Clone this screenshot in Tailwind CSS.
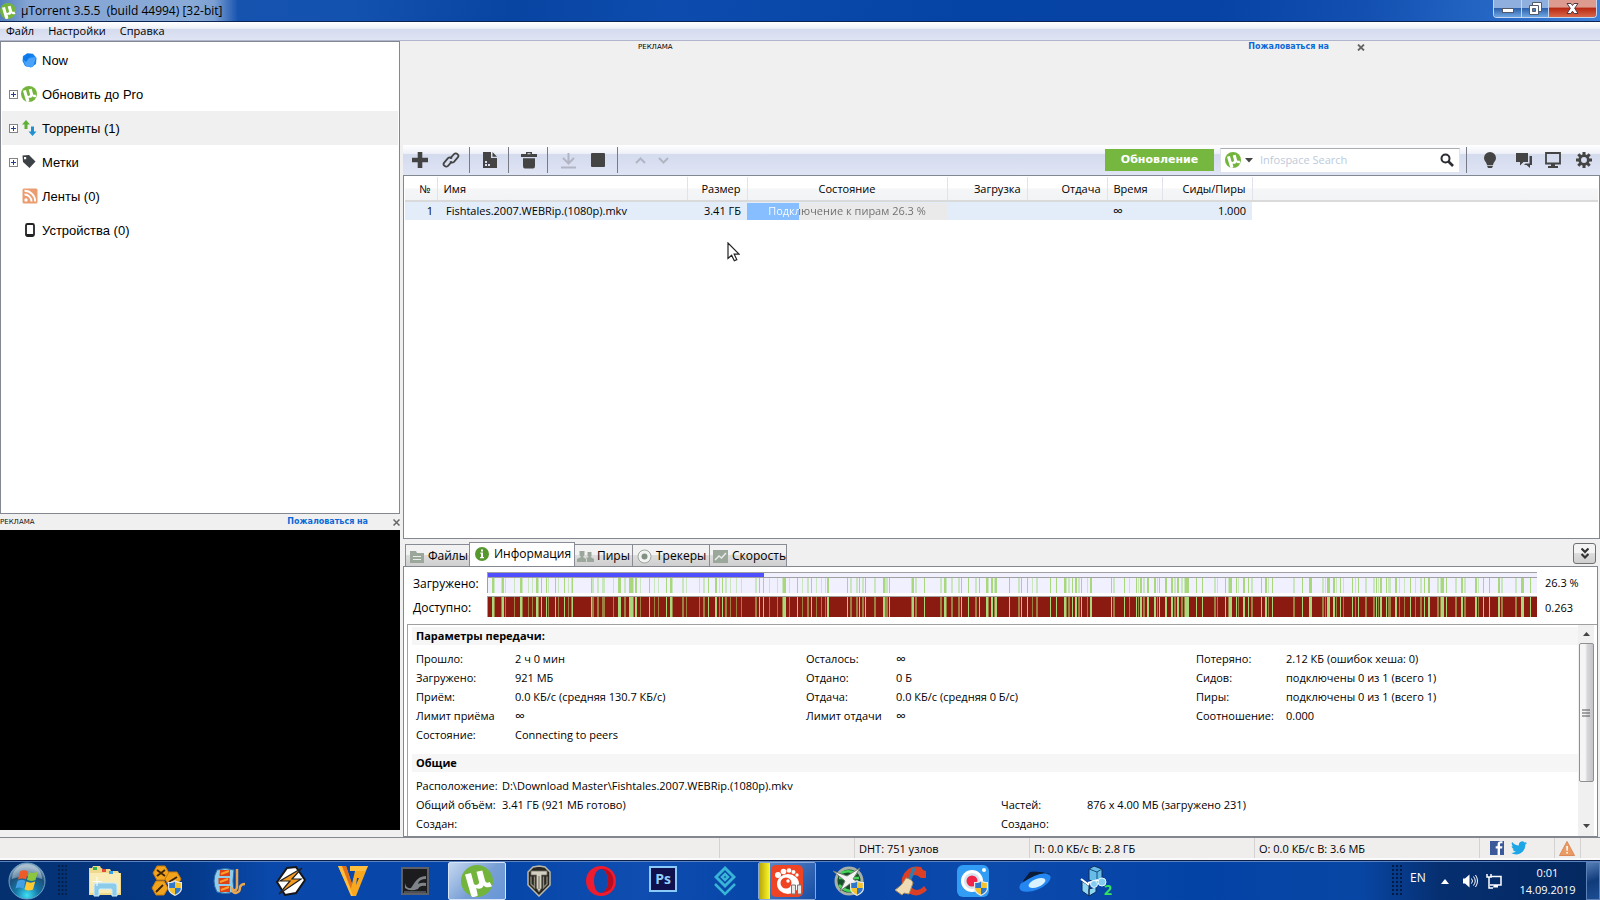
<!DOCTYPE html>
<html lang="ru">
<head>
<meta charset="utf-8">
<title>µTorrent 3.5.5</title>
<script src="https://cdn.jsdelivr.net/npm/@tailwindcss/browser@4"></script>
</head>
<body class="h-screen flex flex-col overflow-hidden bg-[#f0f0f0] text-black text-[11px] leading-4 font-['Open_Sans','Noto_Sans',sans-serif] cursor-default">
<svg class="hidden" aria-hidden="true">
  <symbol id="ut" viewBox="0 0 32 32">
    <circle cx="16" cy="16" r="16" fill="#73b53c"/>
    <path d="M4 9.500l6-1.500 2.800 10.500c.8 2.600 5.700 1.300 5.200-1.800L15.500 6.800l5.800-1.400 2.800 10.400c.5 2 2.600 2.300 4.600 1.300l2.300 4.200c-3 1.700-6.800 1.300-8.400-.900-1 3-4.600 4.200-7.400 2.600l1.600 7.500c-2 1.800-6 1.800-6.600.2z" fill="#fff"/>
  </symbol>
  <symbol id="shield" viewBox="0 0 14 16">
    <path d="M7 0c2 1.500 4 2 7 2v6c0 4-3 6-7 8-4-2-7-4-7-8V2c3 0 5-.5 7-2z" fill="#e8e8e8"/>
    <path d="M7 1.500V8H1.200V3C4 3 5.500 2.500 7 1.500zM7 8h5.800c0 3.300-2.500 5-5.800 6.700z" fill="#2f77c9"/>
    <path d="M7 1.500V8h5.800V3C10 3 8.500 2.500 7 1.500zM7 8H1.200c0 3.300 2.500 5 5.800 6.700z" fill="#f5c32c"/>
  </symbol>
</svg>

<header class="flex h-[22px] shrink-0 justify-between border-b border-[#0b2350] bg-[linear-gradient(100deg,#1b55ad_0%,#1452b0_22%,#0844a2_32%,#0d4cae_42%,#0543a4_60%,#0743a4_76%,#124fb0_85%,#2566c4_93%,#3d80d8_100%)]">
  <div class="flex h-[21px] items-center gap-[5px] bg-[linear-gradient(90deg,#5580bd_0%,#84a5d3_12%,#8aabd8_80%,#7b9fd2_90%,transparent_100%)] pr-4">
    <svg class="size-4" viewBox="0 0 32 32"><use href="#ut"/></svg>
    <h1 class="whitespace-pre text-[12px] leading-4">µTorrent 3.5.5  (build 44994) [32-bit]</h1>
  </div>
  <div class="mr-[3px] flex h-[18px] overflow-hidden rounded-b border border-t-0 border-[#c4d6ee]">
    <button aria-label="Свернуть" class="grid w-7 place-items-center border-r border-[#c4d6ee] bg-[linear-gradient(#8fb0df_45%,#2e62ad_50%,#6ea6e2)]"><svg width="12" height="10" viewBox="0 0 12 10"><rect x=".5" y="4.500" width="11" height="4" fill="#fff" stroke="#555a6a"/></svg></button>
    <button aria-label="Восстановить" class="grid w-[27px] place-items-center border-r border-[#c4d6ee] bg-[linear-gradient(#8fb0df_45%,#2e62ad_50%,#6ea6e2)]"><svg width="13" height="13" viewBox="0 0 13 13"><path d="M3.500.5h9v9h-9z" fill="#fff" stroke="#555a6a"/><path d="M.5 3.500h9v9h-9z" fill="#fff" stroke="#555a6a"/><path d="M3.500 6.500h3v3h-3z" fill="#4e7fc4" stroke="#555a6a"/></svg></button>
    <button aria-label="Закрыть" class="grid w-[47px] place-items-center bg-[linear-gradient(#dd9a8e_40%,#b92b14_50%,#d9674a)]"><svg width="13" height="11" viewBox="0 0 13 11"><path d="M1 .5h4l1.500 2L8 .5h4L8.700 5.300 12 10.500H8.200l-1.700-2.300-1.700 2.300H1l3.300-5.200z" fill="#fff" stroke="#4f3b46"/></svg></button>
  </div>
</header>

<nav class="flex h-[19px] shrink-0 items-center gap-[14px] border-b border-[#b0b5cc] bg-[linear-gradient(#ffffff,#eef1f8_35%,#d4dbee_40%,#e0e5f5)] px-[6px]">
  <a href="#file">Файл</a><a href="#settings">Настройки</a><a href="#help">Справка</a>
</nav>

<main class="flex min-h-0 flex-1">
  <aside class="flex w-1/4 shrink-0 flex-col font-['Liberation_Sans',sans-serif]">
    <ul class="min-h-0 flex-1 border border-[#828790] bg-white p-px text-[13px] leading-4">
      <li class="flex h-[34px] items-center gap-[5px] pl-[20px]"><svg width="15" height="15" viewBox="0 0 15 15"><path d="M5 .5 11 .7 14.500 5 14 11 9 14.500 3 13 .5 8 1 3z" fill="#1583f2"/><path d="M14 4 11 14 4 13.500 1 6z" fill="#4aa3f8"/><path d="M5 .5 10 1 4 9 .8 6z" fill="#0b78ea"/></svg><span class="pt-px">Now</span></li>
      <li class="flex h-[34px] items-center pl-[7px]"><button aria-label="Развернуть" class="mr-[3px] grid size-[9px] place-items-center border border-[#848484] bg-white"><svg width="5" height="5" viewBox="0 0 5 5"><path d="M0 2.500h5M2.500 0v5" stroke="#27408b"/></svg></button><svg class="mr-[5px] size-4" viewBox="0 0 32 32"><use href="#ut"/></svg><span class="pt-px">Обновить до Pro</span></li>
      <li class="flex h-[34px] items-center bg-[#f0f0f0] pl-[7px]"><button aria-label="Развернуть" class="mr-[3px] grid size-[9px] place-items-center border border-[#848484] bg-white"><svg width="5" height="5" viewBox="0 0 5 5"><path d="M0 2.500h5M2.500 0v5" stroke="#27408b"/></svg></button><svg class="mr-[5px]" width="16" height="16" viewBox="0 0 16 16"><path d="M5 0 9 4.500H6.500V9h-3V4.500H1z" fill="#5fae35"/><path d="M11.500 16 7.500 11.500H10V6.500h3v5h2.500z" fill="#2190d2"/></svg><span class="pt-px">Торренты (1)</span></li>
      <li class="flex h-[34px] items-center pl-[7px]"><button aria-label="Развернуть" class="mr-[3px] grid size-[9px] place-items-center border border-[#848484] bg-white"><svg width="5" height="5" viewBox="0 0 5 5"><path d="M0 2.500h5M2.500 0v5" stroke="#27408b"/></svg></button><svg class="mr-[5px]" width="16" height="16" viewBox="0 0 16 16"><path fill-rule="evenodd" d="M1.500 1.500 8 1l6.500 6.500L8.500 14 2 8zM3 3v2.200h2.200V3z" fill="#3d4246"/></svg><span class="pt-px">Метки</span></li>
      <li class="flex h-[34px] items-center gap-[4px] pl-[20px]"><svg width="16" height="16" viewBox="0 0 16 16"><rect x=".5" y=".5" width="15" height="15" rx="1.500" fill="#ec9d70"/><circle cx="4" cy="12" r="1.700" fill="#fff"/><path d="M2.500 6.500a7 7 0 0 1 7 7M2.500 2.800A10.700 10.700 0 0 1 13.200 13.500" fill="none" stroke="#fff" stroke-width="1.900"/></svg><span class="pt-px">Ленты (0)</span></li>
      <li class="flex h-[34px] items-center gap-[4px] pl-[20px]"><svg width="16" height="16" viewBox="0 0 16 16"><rect x="4" y="2" width="8" height="12" rx="1.500" fill="#fff" stroke="#222" stroke-width="1.800"/><path d="M4 13h8" stroke="#222" stroke-width="2"/></svg><span class="pt-px">Устройства (0)</span></li>
    </ul>
    <div class="flex h-4 shrink-0 items-center font-['DejaVu_Sans',sans-serif] text-[7px] leading-4">
      <span class="flex-1 text-[#111]">РЕКЛАМА</span>
      <a href="#report" class="mr-[25px] text-[8px] font-bold text-[#0a68d8]">Пожаловаться на</a>
      <button aria-label="Закрыть рекламу"><svg width="7" height="7" viewBox="0 0 7 7"><path d="M.5.5l6 6M6.500.5l-6 6" stroke="#666" stroke-width="1.500"/></svg></button>
    </div>
    <div class="h-[300px] shrink-0 bg-black"></div>
    <div class="h-[7px] shrink-0"></div>
  </aside>

  <section class="ml-[3px] flex min-w-0 flex-1 flex-col">
    <div class="flex h-[104px] shrink-0 items-start pl-[235px] pr-[235px] font-['DejaVu_Sans',sans-serif] text-[7px] leading-[12px]">
      <span class="flex-1">РЕКЛАМА</span>
      <a href="#report" class="mr-[28px] text-[8px] font-bold text-[#0a68d8]">Пожаловаться на</a>
      <button aria-label="Закрыть рекламу" class="pt-[3px]"><svg width="8" height="7" viewBox="0 0 8 7"><path d="M1 .5l6 6M7 .5l-6 6" stroke="#666" stroke-width="1.800"/></svg></button>
    </div>

    <div class="flex h-[30px] shrink-0 items-center bg-[linear-gradient(#ffffff,#eef1f8_28%,#d4dbee_32%,#e0e5f5)] text-[#444]">
      <button aria-label="Добавить торрент" class="ml-[9px]"><svg width="16" height="16" viewBox="0 0 16 16"><path d="M5.700 0h4.600v5.700H16v4.600h-5.700V16H5.700v-5.700H0V5.700h5.700z" fill="currentColor"/></svg></button>
      <button aria-label="Добавить по ссылке" class="ml-[14px]"><svg width="18" height="18" viewBox="0 0 18 18" fill="none" stroke="currentColor" stroke-width="1.800"><path d="M8 7.500 12 3.200c2.200-2.200 5.800.8 3.800 3.200L12 10.800c-1.300 1.200-3 1-4-.3"/><path d="M10 10.500 6 14.800c-2.200 2.200-5.800-.8-3.800-3.200L6 7.200c1.300-1.200 3-1 4 .3"/></svg></button>
      <i class="ml-[9px] h-[26px] w-px bg-[#777b88]"></i>
      <button aria-label="Создать торрент" class="ml-[12px]"><svg width="16" height="17" viewBox="0 0 16 17"><path fill-rule="evenodd" d="M1 0h8v6h6v10H1zM3 9v2h2V9zm0 3v2h2v-2zm3 0v2h2v-2zM10.500 0 15 4.800h-4.500z" fill="currentColor"/></svg></button>
      <i class="ml-[10px] h-[26px] w-px bg-[#777b88]"></i>
      <button aria-label="Удалить" class="ml-[12px]"><svg width="16" height="17" viewBox="0 0 16 17"><path d="M5 0h6v2h5v3H0V2h5zM6.500 1.200v1h3v-1zM2 6.200h12V14q0 2.500-2 2.500H4Q2 16.500 2 14z" fill="currentColor" fill-rule="evenodd"/></svg></button>
      <i class="ml-[10px] h-[26px] w-px bg-[#777b88]"></i>
      <button aria-label="Запустить" class="ml-[13px] text-[#b2b6c4]"><svg width="15" height="17" viewBox="0 0 15 17" fill="none" stroke="currentColor" stroke-width="2"><path d="M7.500 1v10M2 6l5.500 5.500L13 6M0 15.500h15"/></svg></button>
      <button aria-label="Остановить" class="ml-[15px]"><svg width="14" height="14" viewBox="0 0 14 14"><rect width="14" height="14" rx="1" fill="currentColor"/></svg></button>
      <i class="ml-[12px] h-[26px] w-px bg-[#777b88]"></i>
      <button aria-label="Вверх" class="ml-[17px] text-[#b2b6c4]"><svg width="11" height="7" viewBox="0 0 11 7"><path d="M1 6l4.500-4.500L10 6" fill="none" stroke="currentColor" stroke-width="2"/></svg></button>
      <button aria-label="Вниз" class="ml-[12px] text-[#b2b6c4]"><svg width="11" height="7" viewBox="0 0 11 7"><path d="M1 1l4.500 4.500L10 1" fill="none" stroke="currentColor" stroke-width="2"/></svg></button>
      <button class="ml-auto h-[22px] w-[109px] bg-[#76b83f] font-['DejaVu_Sans',sans-serif] text-[11px] font-bold text-white">Обновление</button>
      <div class="ml-[6px] flex h-[25px] w-[240px] items-center border border-t-[#abadb3] border-[#dfe3ee] bg-white pl-1 pr-[5px]">
        <svg class="size-4" viewBox="0 0 32 32"><use href="#ut"/></svg>
        <button aria-label="Поисковик" class="ml-[4px]"><svg width="8" height="5" viewBox="0 0 8 5"><path d="M0 0h8L4 4.500z" fill="#444"/></svg></button>
        <input aria-label="Поиск" placeholder="Infospace Search" class="ml-[7px] min-w-0 flex-1 text-[11px] outline-none placeholder:text-[#bccbdc]">
        <button aria-label="Найти"><svg width="14" height="14" viewBox="0 0 14 14" fill="none" stroke="#2a2d33"><circle cx="5.500" cy="5.500" r="4" stroke-width="2"/><path d="M8.500 8.500l4.500 4.500" stroke-width="2.600"/></svg></button>
      </div>
      <i class="ml-[6px] h-[26px] w-px bg-[#777b88]"></i>
      <button aria-label="Подсказка" class="ml-[17px]"><svg width="12" height="16" viewBox="0 0 12 16"><path d="M6 0a6 6 0 0 1 6 6c0 3-2.500 4-3 7H3c-.500-3-3-4-3-7a6 6 0 0 1 6-6zM3 13.800h6L8 16H4z" fill="currentColor"/></svg></button>
      <button aria-label="Чат" class="ml-[20px]"><svg width="16" height="15" viewBox="0 0 16 15"><path d="M0 0h12v9H7.500L4 12.500V9H0z" fill="currentColor"/><path d="M13.500 3H16v9h-2v3l-3.500-3H8l1.500-1.500h4z" fill="currentColor"/></svg></button>
      <button aria-label="Удалённый доступ" class="ml-[13px]"><svg width="16" height="16" viewBox="0 0 16 16"><path d="M1 1h14v10.500H1z" fill="none" stroke="currentColor" stroke-width="1.800"/><path d="M6 12h4v2h3v2H3v-2h3z" fill="currentColor"/></svg></button>
      <button aria-label="Настройки" class="ml-[15px] mr-[8px]"><svg width="16" height="16" viewBox="0 0 16 16"><g stroke="currentColor" stroke-width="3"><path d="M8 0v3M8 13v3M0 8h3M13 8h3M2.300 2.300l2.200 2.200M11.500 11.500l2.200 2.200M2.300 13.700l2.200-2.200M11.500 4.500l2.200-2.200"/></g><circle cx="8" cy="8" r="4.300" fill="none" stroke="currentColor" stroke-width="2.700"/></svg></button>
    </div>

    <div class="relative min-h-0 flex-1 border border-[#828790] bg-white p-px">
      <table class="w-full table-fixed border-collapse whitespace-nowrap text-[11px] leading-4">
        <colgroup><col class="w-[32px]"><col class="w-[250px]"><col class="w-[60px]"><col class="w-[200px]"><col class="w-[80px]"><col class="w-[80px]"><col class="w-[55px]"><col class="w-[90px]"><col></colgroup>
        <thead class="bg-[linear-gradient(#ffffff_45%,#f5f6f7_50%,#f2f3f4)]">
          <tr class="h-6 border-b-2 border-[#dadada]">
            <th class="border-r border-[#e2e3ea] pr-[6px] text-right font-normal">№</th>
            <th class="border-r border-[#e2e3ea] pl-[6px] text-left font-normal">Имя</th>
            <th class="border-r border-[#e2e3ea] pr-[6px] text-right font-normal">Размер</th>
            <th class="border-r border-[#e2e3ea] font-normal">Состояние</th>
            <th class="border-r border-[#e2e3ea] pr-[6px] text-right font-normal">Загрузка</th>
            <th class="border-r border-[#e2e3ea] pr-[6px] text-right font-normal">Отдача</th>
            <th class="border-r border-[#e2e3ea] pl-[6px] text-left font-normal">Время</th>
            <th class="border-r border-[#e2e3ea] pr-[6px] text-right font-normal">Сиды/Пиры</th>
            <th></th>
          </tr>
        </thead>
        <tbody>
          <tr class="h-[19px]">
            <td class="bg-[#e3edf9] pr-[4px] text-right">1</td>
            <td class="bg-[#e3edf9] pl-[9px]">Fishtales.2007.WEBRip.(1080p).mkv</td>
            <td class="bg-[#e3edf9] pr-[6px] text-right">3.41 ГБ</td>
            <td class="bg-[#e3edf9]"><div class="h-[17px] bg-[linear-gradient(90deg,#86beff_26%,#eaeaea_26%)] text-center"><span class="block bg-[linear-gradient(90deg,#ffffff_26%,#6c6c6c_26%)] bg-clip-text text-transparent">Подключение к пирам 26.3 %</span></div></td>
            <td class="bg-[#e3edf9]"></td>
            <td class="bg-[#e3edf9]"></td>
            <td class="bg-[#e3edf9] pl-[6px] text-[14px]">∞</td>
            <td class="bg-[#e3edf9] pr-[6px] text-right">1.000</td>
            <td></td>
          </tr>
        </tbody>
      </table>
      <svg class="absolute left-[323px] top-[66px]" width="13" height="20" viewBox="0 0 13 20"><path d="M1 1v15.500l3.600-3.300 2.700 5.600 2.500-1.200-2.600-5.400H12z" fill="#fff" stroke="#222" stroke-width="1.200"/></svg>
    </div>

    <div class="flex h-[27px] shrink-0 items-end pl-[2px] pr-[4px] text-[12px] leading-4">
      <div role="tablist" class="flex items-end">
        <button role="tab" class="flex h-[22px] w-[64px] items-center gap-[4px] overflow-hidden whitespace-nowrap border border-b-0 border-r-0 border-[#898c95] bg-[linear-gradient(#f2f2f2_45%,#dddddd_50%,#cfcfcf)] pl-[4px] pt-px"><svg class="shrink-0" width="14" height="13" viewBox="0 0 14 13"><path d="M0 1h6l1 2h7v10H0z" fill="#9ba79b"/><path d="M3 6.500h8M3 9.500h8" stroke="#e9ece9"/></svg>Файлы</button>
        <button role="tab" aria-selected="true" class="flex h-6 w-[106px] items-center gap-[5px] overflow-hidden whitespace-nowrap border border-b-0 border-[#898c95] bg-white pb-[1px] pl-[5px]"><svg class="shrink-0" width="14" height="14" viewBox="0 0 14 14"><circle cx="7" cy="7" r="7" fill="#56982d"/><path d="M6 2.500h2v2H6zM5.300 5.500H8V10h1v1.200H5V10h1V6.700h-.7z" fill="#fff"/></svg>Информация</button>
        <button role="tab" class="flex h-[22px] w-[58px] items-center gap-[3px] overflow-hidden whitespace-nowrap border border-b-0 border-l-0 border-[#898c95] bg-[linear-gradient(#f2f2f2_45%,#dddddd_50%,#cfcfcf)] pl-[2px] pt-px"><svg class="shrink-0" width="17" height="12" viewBox="0 0 17 12"><path d="M2.500 1h5v4L6 7l3 2v3H0V9l4-2-1.500-2zM10.500 2h4v4l-1 1 3.500 2v3h-7V9L9 8l3-1-1.500-1z" fill="#9ba79b"/></svg>Пиры</button>
        <button role="tab" class="flex h-[22px] w-[77px] items-center gap-[4px] overflow-hidden whitespace-nowrap border border-b-0 border-l-0 border-[#898c95] bg-[linear-gradient(#f2f2f2_45%,#dddddd_50%,#cfcfcf)] pl-[4px] pt-px"><svg class="shrink-0" width="15" height="15" viewBox="0 0 15 15"><circle cx="7.500" cy="7.500" r="6.500" fill="#f2f3f2" stroke="#9ba79b"/><circle cx="7.500" cy="7.500" r="3" fill="#829182"/></svg>Трекеры</button>
        <button role="tab" class="flex h-[22px] w-[77px] items-center gap-[4px] overflow-hidden whitespace-nowrap border border-b-0 border-l-0 border-[#898c95] bg-[linear-gradient(#f2f2f2_45%,#dddddd_50%,#cfcfcf)] pl-[3px] pt-px"><svg class="shrink-0" width="15" height="13" viewBox="0 0 15 13"><path d="M0 0h15v13H0z" fill="#9ba79b"/><path d="M2 10 6 6l2.500 2L13 3" fill="none" stroke="#e9ece9" stroke-width="1.500"/></svg>Скорость</button>
      </div>
      <button aria-label="Скрыть панель" class="mb-[2px] ml-auto grid h-[21px] w-[23px] place-items-center rounded-[3px] border border-[#707070] bg-[linear-gradient(#f4f4f4_45%,#dddddd_50%,#cfcfcf)]"><svg width="8" height="11" viewBox="0 0 8 11"><path d="M.5.5 4 4 7.500.5M.5 6 4 9.500 7.500 6" fill="none" stroke="#333" stroke-width="2.200"/></svg></button>
    </div>

    <div class="mr-[2px] flex h-[271px] shrink-0 flex-col border border-[#828790] bg-white">
      <div class="grid grid-cols-[74px_1fr_60px] gap-y-[3px] pl-[9px] pt-[5px] text-[12px]">
        <span class="pt-[4px]">Загружено:</span>
        <div class="h-[21px] border-l border-t border-[#a0a0a0] bg-[#f0f0ff]">
          <div class="h-[4px] bg-[#4f4fff]" style="width:26.300%"></div>
          <svg id="have" class="h-4 w-full border-t border-[#a0a0a0]" viewBox="488 0 1049 1" preserveAspectRatio="none" shape-rendering="crispEdges"></svg>
        </div>
        <span class="pl-[8px] pt-[3px] text-[11px]">26.3 %</span>
        <span class="pt-[4px]">Доступно:</span>
        <div class="h-[21px] border-l border-t border-[#a0a0a0] bg-[#8b1a10]">
          <svg id="avail" class="h-full w-full" viewBox="488 0 1049 1" preserveAspectRatio="none" shape-rendering="crispEdges"></svg>
        </div>
        <span class="pl-[8px] pt-[4px] text-[11px]">0.263</span>
      </div>
      <div class="ml-[3px] mt-[7px] flex min-h-0 flex-1 border-l border-t border-[#a0a0a0]">
        <div class="min-w-0 flex-1 pl-[4px] pt-[2px] whitespace-nowrap">
          <h2 class="mb-[4px] bg-[#f6f6f6] pl-[4px] text-[11px] font-bold leading-[18px]">Параметры передачи:</h2>
          <div class="grid grid-cols-[390px_390px_1fr] pl-[4px] leading-[19px]">
            <dl class="grid grid-cols-[99px_1fr] content-start"><dt>Прошло:</dt><dd>2 ч 0 мин</dd><dt>Загружено:</dt><dd>921 МБ</dd><dt>Приём:</dt><dd>0.0 КБ/с (средняя 130.7 КБ/с)</dd><dt>Лимит приёма</dt><dd class="text-[14px]">∞</dd><dt>Состояние:</dt><dd>Connecting to peers</dd></dl>
            <dl class="grid grid-cols-[90px_1fr] content-start"><dt>Осталось:</dt><dd class="text-[14px]">∞</dd><dt>Отдано:</dt><dd>0 Б</dd><dt>Отдача:</dt><dd>0.0 КБ/с (средняя 0 Б/с)</dd><dt>Лимит отдачи</dt><dd class="text-[14px]">∞</dd></dl>
            <dl class="grid grid-cols-[90px_1fr] content-start"><dt>Потеряно:</dt><dd>2.12 КБ (ошибок хеша: 0)</dd><dt>Сидов:</dt><dd>подключены 0 из 1 (всего 1)</dd><dt>Пиры:</dt><dd>подключены 0 из 1 (всего 1)</dd><dt>Соотношение:</dt><dd>0.000</dd></dl>
          </div>
          <h2 class="mb-[4px] mt-[10px] bg-[#f6f6f6] pl-[4px] text-[11px] font-bold leading-[18px]">Общие</h2>
          <div class="grid grid-cols-[585px_1fr] pl-[4px] leading-[19px]">
            <dl class="grid grid-cols-[86px_1fr] content-start"><dt>Расположение:</dt><dd>D:\Download Master\Fishtales.2007.WEBRip.(1080p).mkv</dd><dt>Общий объём:</dt><dd>3.41 ГБ (921 МБ готово)</dd><dt>Создан:</dt><dd></dd></dl>
            <dl class="grid grid-cols-[86px_1fr] content-end"><dt>Частей:</dt><dd>876 x 4.00 МБ (загружено 231)</dd><dt>Создано:</dt><dd></dd></dl>
          </div>
        </div>
        <div class="mr-[3px] flex w-4 shrink-0 flex-col items-center bg-[#f0f0f0] pb-[2px]">
          <button aria-label="Прокрутить вверх" class="grid h-[18px] w-full shrink-0 place-items-center"><svg width="7" height="4" viewBox="0 0 7 4"><path d="M3.500 0 7 4H0z" fill="#444"/></svg></button>
          <div class="grid h-[139px] w-[15px] shrink-0 place-items-center rounded-[2px] border border-[#909090] bg-[linear-gradient(90deg,#f5f5f5_40%,#d8d8dc_55%,#c4c4c8)]"><svg width="8" height="8" viewBox="0 0 8 8"><path d="M0 1h8M0 4h8M0 7h8" stroke="#555"/></svg></div>
          <button aria-label="Прокрутить вниз" class="mt-auto grid h-[17px] w-full shrink-0 place-items-center"><svg width="7" height="4" viewBox="0 0 7 4"><path d="M0 0h7L3.500 4z" fill="#444"/></svg></button>
        </div>
      </div>
    </div>
  </section>
</main>

<footer class="flex h-[23px] shrink-0 items-center justify-end border-b-2 border-t border-[#fafafa] border-t-[#828790] bg-[#f0eded] text-[11px] leading-[22px]">
  <div class="h-full w-[135px] border-l border-[#d5d2d2]"></div>
  <div class="h-full w-[175px] border-l border-[#d5d2d2] pl-[4px]">DHT: 751 узлов</div>
  <div class="h-full w-[225px] border-l border-[#d5d2d2] pl-[4px]">П: 0.0 КБ/с В: 2.8 ГБ</div>
  <div class="h-full w-[225px] border-l border-[#d5d2d2] pl-[4px]">О: 0.0 КБ/с В: 3.6 МБ</div>
  <div class="flex h-full w-[75px] items-center gap-[7px] border-l border-[#d5d2d2] pl-[10px]">
    <a href="#fb" aria-label="Facebook"><svg width="14" height="14" viewBox="0 0 14 14"><path d="M0 0h14v14H0z" fill="#3b5998"/><path d="M12.500 2.300h-1.300c-1 0-1.200.4-1.200 1.200v1.700h2.400l-.3 2.200H10V14H7.600V7.400H5.700V5.200h1.900V3.300C7.600 1.200 8.800.200 10.700.2l1.800.1z" fill="#fff"/></svg></a>
    <a href="#tw" aria-label="Twitter"><svg width="16" height="14" viewBox="0 0 24 20"><path d="M24 2.400c-.9.400-1.800.7-2.800.8 1-.6 1.800-1.600 2.200-2.700-1 .6-2 1-3.100 1.200A4.900 4.900 0 0 0 11.900 6.200C7.800 6 4.200 4 1.700.9.400 3.200 1.100 6 3.200 7.500c-.8 0-1.500-.2-2.200-.6 0 2.400 1.700 4.400 3.900 4.900-.7.200-1.500.2-2.200.1.600 2 2.400 3.400 4.600 3.400A9.900 9.900 0 0 1 0 17.300C10 23.500 21.700 16.500 21.500 4.900c1-.7 1.800-1.600 2.500-2.500z" fill="#1da5e6"/></svg></a>
  </div>
  <div class="flex h-full w-[26px] items-center border-l border-[#d5d2d2] pl-[4px]"><svg width="16" height="15" viewBox="0 0 16 15"><path d="M8 .5 15.500 14.500H.5z" fill="#ea9a62" stroke="#d98a58"/><path d="M7.200 5h1.800l-.3 5H7.500zM7.300 11h1.600v1.600H7.300z" fill="#fff"/></svg></div>
  <div class="h-full w-[20px] border-l border-[#d5d2d2]"></div>
</footer>

<div class="flex h-10 shrink-0 border-t border-[#0a1f4c] bg-[linear-gradient(90deg,#05306f_0%,#043a8c_12%,#0a49ab_17%,#0645a8_30%,#0f4eb0_40%,#0443a6_50%,#0c4aac_62%,#0443a6_75%,#0846a4_85%,#062f70_90%,#04285f_100%)]">
 <div class="flex flex-1 border-t border-[#5a83c0]">
  <button aria-label="Пуск" class="grid w-[54px] place-items-center"><svg width="38" height="38" viewBox="0 0 38 38"><defs><radialGradient id="orb" cx="50%" cy="90%" r="80%"><stop offset="0" stop-color="#3fe0f5"/><stop offset=".4" stop-color="#1578a8"/><stop offset=".75" stop-color="#1d4f79"/><stop offset="1" stop-color="#7d9fb8"/></radialGradient></defs><circle cx="19" cy="19" r="18" fill="url(#orb)" stroke="#6fa2c8"/><path d="M4 17a15 15 0 0 1 30 0q-15-6-30 0z" fill="#fff" opacity=".35"/><path d="M12 9.500q4-2.500 8 0l-2 8q-4-2-8 0z" fill="#ee5a28"/><path d="M21 10q4 2 9-.5l-2.500 8.500q-4.500 2-8.500-.2z" fill="#8cc63f"/><path d="M9.500 19q4-2.300 8 0l-2 7.500q-4-2.200-8 0z" fill="#43a0e5"/><path d="M18.500 19.500q4 2.300 8.700 0L25 27.500q-4.500 2.200-8.500-.2z" fill="#ffc933"/></svg></button>
  <svg class="ml-[3px] mt-[3px]" width="10" height="32" viewBox="0 0 10 32"><path d="M2 0v32M5.500 0v32M9 0v32" stroke="#06204a" stroke-width="2" stroke-dasharray="2 2"/></svg>
  <div class="ml-[7px] flex">
    <button aria-label="Проводник" class="grid w-[62px] place-items-center"><svg width="32" height="32" viewBox="0 0 32 32"><path d="M0 3h3l1-2h7l1 2 2 1h7l1 2h7l1 2h2v22H0z" fill="#efd98c"/><path d="M1 8h30v20H1z" fill="#f8ebb5"/><path d="M4 2h4v3H4z" fill="#35b24a"/><path d="M13 4h4v3h-4z" fill="#e24a3a"/><path d="M20 6h4v3h-4z" fill="#38a1ea"/><path d="M5 31V21q0-3 3-3h17q3 0 3 3v10h-5v-6q0-1-1-1H11q-1 0-1 1v6z" fill="#8ccbea" stroke="#cfeefa"/><path d="M8 12v9M3.500 16.500h9" stroke="#fff"/></svg></button>
    <button aria-label="Служебные программы" class="grid w-[62px] place-items-center"><svg width="32" height="32" viewBox="0 0 32 32"><g fill="#f2a31c" stroke="#c97a0b"><path d="M6 1h8l4 7-4 7H6L2 8z"/><path d="M18 7h8l4 7-4 7h-8l-4-7z"/><path d="M5 16h8l4 7-4 7H5L1 23z"/></g><path d="M6 5l8 6M14 5l-8 6M5 27l7-7M18 17l8-5" stroke="#3c2408" stroke-width="1.800"/><svg x="17" y="15" width="14" height="16"><use href="#shield"/></svg></svg></button>
    <button aria-label="Видеоредактор" class="grid w-[62px] place-items-center"><svg width="32" height="28" viewBox="0 0 32 28"><path d="M4 3q8-3 17 0-2 11 0 22-9 3-17 0Q-2 14 4 3z" fill="#8fcdea" stroke="#2d6fa8"/><path d="M7 3h10v6H6.500zM5.500 11h11v6h-11zM6.500 19H17v6H7z" fill="#dd4217"/><path d="M8 7l8-3M7 15l8-3M8 23l8-3" stroke="#ff9e2c" stroke-width="2"/><path d="M24 2v16q0 8-5 4 1 6 6 3 2-1 2-5 1-3 5-3" fill="none" stroke="#e8a650" stroke-width="2.500"/></svg></button>
    <button aria-label="Winamp" class="grid w-[62px] place-items-center"><svg width="30" height="32" viewBox="0 0 30 32"><path d="M11 3 20 2l9 13-9 13-11 2L1 17z" fill="#fff" stroke="#161616" stroke-width="2"/><path d="M26 3 4 16l10 0L3 29l22-15-9 0z" fill="#f59a21" stroke="#222" stroke-width="1.200"/></svg></button>
    <button aria-label="Видеоконвертер" class="grid w-[62px] place-items-center"><svg width="30" height="32" viewBox="0 0 30 32"><path d="M0 1h8l6 18L17 6h8l-2 7h-4l-1 7 8-19h4L18 31h-4z" fill="#f9a71d"/><path d="M0 1h4l11 30h-2zM12 1h18l-3 5H12z" fill="#ffbe3e"/><path d="M8 1l6 18-1 5L4 1z" fill="#e2701b"/></svg></button>
    <button aria-label="Игра" class="grid w-[62px] place-items-center"><svg width="28" height="28" viewBox="0 0 28 28"><path d="M1 1h26v26H1z" fill="#1c1c1e" stroke="#5d6167" stroke-width="2"/><path d="M4 16q1 6 6 5l4-6q4-6 11-6v3q-7 0-8 5 4-2 8-1v3q-6-1-8 3-8 3-13-1z" fill="#7f8489"/><path d="M3 25h22" stroke="#7f8489"/></svg></button>
    <button aria-label="µTorrent" class="ml-[2px] grid w-[58px] place-items-center self-stretch rounded-[2px] border border-[#d5e4f8] bg-[linear-gradient(135deg,#c5d8f1,#789fd5_55%,#6796d8)]"><svg width="32" height="32" viewBox="0 0 32 32"><use href="#ut"/></svg></button>
    <button aria-label="World of Tanks" class="ml-1 grid w-[58px] place-items-center"><svg width="24" height="32" viewBox="0 0 24 32"><path d="M6 2 12 1l6 1 5 5v13L12 31 1 20V7z" fill="#292722" stroke="#bcb8aa" stroke-width="1.500"/><path d="M4 6h16v4h-5.500v13L12 27l-2.500-4V10H4z" fill="#d3d0c2" stroke="#777265" stroke-width=".8"/><path d="M4 11.500v7.500l3.500 3.500v-11M20 11.500v7.500l-3.500 3.500v-11M12 11v13" fill="none" stroke="#8c887a" stroke-width="1.400"/></svg></button>
    <button aria-label="Opera" class="ml-[2px] grid w-[62px] place-items-center"><svg width="30" height="32" viewBox="0 0 30 32"><path fill-rule="evenodd" d="M15 1C6 1 0 8 0 16s6 15 15 15 15-7 15-15S24 1 15 1zm0 3c4 0 7 5 7 12s-3 12-7 12-7-5-7-12S11 4 15 4z" fill="#ee1c2e"/><path d="M15 28q5 0 10-4 5-8 0-16-5-5-10-4c4 0 7 5 7 12s-3 12-7 12z" fill="#b90d1f"/></svg></button>
    <button aria-label="Photoshop" class="grid w-[62px] place-items-center pb-1"><span class="grid h-[26px] w-7 place-items-center border-2 border-[#8acbfa] bg-[#11104f] text-[14px] font-bold leading-4 text-[#92cffb]">Ps</span></button>
    <button aria-label="Программа" class="grid w-[62px] place-items-center"><svg width="22" height="32" viewBox="0 0 22 32" fill="none" stroke="#38b5d6" stroke-width="3"><path d="M11 3 20 12 11 21 2 12z"/><path d="M11 9l3 3-3 3-3-3zM1 19l10 10 10-10" stroke-width="2.500"/></svg></button>
    <div class="ml-[2px] flex w-[58px] self-stretch overflow-hidden rounded-[2px] border border-[#86a8dc] bg-[#265cad]"><i class="w-[11px] shrink-0 bg-[linear-gradient(90deg,#b5a407,#fffa2a)]"></i><button aria-label="Запись экрана" class="flex flex-1 items-center bg-[linear-gradient(135deg,#5885c8,#164da4)] pl-px"><svg class="shrink-0" width="32" height="32" viewBox="0 0 32 32"><rect width="32" height="32" rx="5" fill="#ee4424"/><g fill="#fff"><ellipse cx="17" cy="19" rx="11" ry="10"/><circle cx="7" cy="10" r="3"/><circle cx="12.500" cy="6.500" r="2.800"/><circle cx="18" cy="5.500" r="2.300"/><circle cx="22.500" cy="7" r="2"/><circle cx="26" cy="10" r="1.700"/></g><circle cx="15" cy="18" r="5.500" fill="#ee4424"/><circle cx="17" cy="16" r="1.700" fill="#fff"/><path d="M20.500 20h4v9h-4zM26.500 20h4v9h-4z" fill="#e8e8e8" stroke="#777"/></svg></button></div>
    <button aria-label="Игровой центр" class="ml-[2px] grid w-[62px] place-items-center"><svg width="32" height="32" viewBox="0 0 32 32"><circle cx="16" cy="16" r="13" fill="#174f2a" stroke="#a6afa8" stroke-width="3"/><path d="M8 8q8-4 16 1M6 13h20M6 20q8 8 14 5" stroke="#46d458" stroke-width="2.500" fill="none"/><path d="M0 6 14 11 27 3 20 14l8 5-10-1-11 8 5-10z" fill="#f3f4f2" stroke="#737d75"/><svg x="17" y="15" width="14" height="16"><use href="#shield"/></svg></svg></button>
    <button aria-label="CCleaner" class="grid w-[62px] place-items-center"><svg width="32" height="32" viewBox="0 0 32 32"><path d="M31 6v7h-5q-8-7-11 3-1 7 6 9 5 0 8-4l3 4q-7 7-14 5Q5 27 7 13 12-1 26 2l2 3z" fill="#db4027"/><path d="M18 2 13 14l3 2 5-13z" fill="#317ead"/><path d="M11 13q6 1 7 5l-4 11-5-1-2 2-7-5q7-4 11-12z" fill="#efdcb4" stroke="#aa8e62"/></svg></button>
    <button aria-label="Камера" class="grid w-[62px] place-items-center"><svg width="32" height="32" viewBox="0 0 32 32"><rect width="32" height="32" rx="6" fill="#329df4"/><circle cx="15" cy="16" r="11" fill="#fff"/><circle cx="15" cy="16" r="8" fill="#d5e4ee"/><circle cx="15" cy="16" r="5.500" fill="#ef2647"/><circle cx="27" cy="5" r="2" fill="#fff"/><svg x="17" y="15" width="14" height="16"><use href="#shield"/></svg></svg></button>
    <button aria-label="Яндекс.Диск" class="grid w-[62px] place-items-center"><svg width="32" height="26" viewBox="0 0 32 26"><path d="M4 13 11 4q8-1 20 2L12 15z" fill="#0c1c36"/><ellipse cx="16" cy="14.500" rx="16.500" ry="7.500" transform="rotate(-22 16 14.500)" fill="#2486f0"/><path d="M3 15 11 4q8-1 15 1-10 1-23 10z" fill="#0c1c36"/><ellipse cx="18" cy="15" rx="9" ry="4" transform="rotate(-22 18 15)" fill="#d8f2ff"/></svg></button>
    <button aria-label="Утилита" class="grid w-[62px] place-items-center"><svg width="34" height="32" viewBox="0 0 34 32"><path d="M9 4 14 1l8 3v12l-5 2-8-3z" fill="#67bde7" stroke="#102d57"/><path d="M9 4l8 3v10M17 7l5-3" fill="none" stroke="#174e7e"/><path d="M2 16l7 5v10l-7-5zM9 24l7-2v5l-7 4z" fill="#8ed6f2" stroke="#102d57"/><path d="M1 14l8 6M8 18l10-3" stroke="#fff" stroke-width="2"/><circle cx="14" cy="19" r="3.500" fill="#85cdf0" stroke="#e6faff"/><circle cx="22" cy="17" r="4" fill="#85cdf0" stroke="#e6faff"/><text x="24" y="30" font-family="Open Sans" font-size="14" font-weight="700" fill="#35e35d">2</text></svg></button>
  </div>
  <div class="ml-auto flex items-center text-[11px] text-white">
    <svg width="10" height="32" viewBox="0 0 10 32"><path d="M1 0v32M5 0v32M9 0v32" stroke="#051a3f" stroke-width="2" stroke-dasharray="2 2"/></svg>
    <span class="ml-[8px] w-[26px] pb-[6px] text-[12px]">EN</span>
    <button aria-label="Скрытые значки" class="ml-[5px]"><svg width="8" height="5" viewBox="0 0 8 5"><path d="M4 0l4 5H0z" fill="#fff"/></svg></button>
    <svg class="ml-[13px]" width="16" height="16" viewBox="0 0 16 16"><path d="M1 5.500h2L7.500 1.500v13L3 10.500H1z" fill="#fff"/><path d="M9.500 5.500q2 2.500 0 5M11.500 3.500q3.500 4.500 0 9M13.500 2q4 6 0 12" fill="none" stroke="#fff"/></svg>
    <svg class="ml-[8px]" width="16" height="16" viewBox="0 0 16 16"><path d="M5 3.500h10V12H4" fill="none" stroke="#fff" stroke-width="1.500"/><path d="M8 12h4v2.500H7z" fill="#fff"/><path d="M1 1v3h4V1M3 4v11h4" fill="none" stroke="#fff" stroke-width="1.500"/></svg>
    <time class="ml-[7px] w-[77px] whitespace-pre-line text-center leading-[17px]">0:01
14.09.2019</time>
    <button aria-label="Показать рабочий стол" class="h-full w-[14px] border border-[#5c81b7] bg-[linear-gradient(160deg,#547eb5,#103b7a_50%,#1d4e93)]"></button>
  </div>
 </div>
</div>

<script>
// Pieces of the torrent as [position, width]; "full" pieces are complete, "part" pieces only partly.
const full = [[492,2],[502,2],[520,2],[536,2],[541,1],[546,1],[555,1],[564,1],[572,1],[591,1],[618,3],[629,4],[635,2],[649,1],[666,1],[670,2],[708,1],[715,2],[722,1],[759,1],[763,1],[783,3],[797,1],[811,1],[827,2],[847,1],[859,1],[865,1],[883,2],[889,1],[912,2],[924,1],[944,2],[961,1],[968,1],[979,1],[986,2],[991,2],[995,2],[1009,1],[1021,1],[1027,1],[1050,1],[1056,1],[1064,2],[1072,1],[1075,2],[1081,1],[1090,2],[1111,1],[1124,1],[1136,1],[1140,2],[1147,2],[1154,2],[1159,1],[1165,2],[1171,2],[1177,2],[1185,4],[1196,1],[1202,1],[1225,1],[1229,3],[1236,1],[1243,2],[1248,1],[1261,1],[1265,2],[1272,1],[1302,1],[1309,3],[1327,3],[1333,2],[1340,1],[1352,1],[1358,1],[1376,1],[1380,2],[1386,1],[1395,2],[1410,1],[1424,1],[1428,2],[1441,3],[1446,1],[1461,2],[1475,2],[1483,1],[1489,1],[1498,2],[1521,3],[1530,1]];
const part = [[494,1],[501,1],[505,1],[514,1],[522,1],[528,1],[532,1],[538,1],[548,1],[558,1],[568,1],[571,1],[592,2],[597,2],[602,3],[613,1],[624,2],[633,1],[640,1],[654,1],[658,1],[672,1],[682,2],[686,1],[699,1],[703,2],[719,1],[725,2],[730,1],[736,1],[741,1],[755,2],[769,1],[777,1],[782,1],[789,1],[802,1],[807,2],[816,1],[821,1],[825,1],[850,2],[856,2],[862,2],[874,2],[885,3],[911,1],[915,2],[940,2],[946,1],[951,2],[958,2],[975,2],[988,1],[994,1],[1018,2],[1032,1],[1036,2],[1066,1],[1068,2],[1078,2],[1087,1],[1113,2],[1129,1],[1138,1],[1143,2],[1157,1],[1174,2],[1181,2],[1184,1],[1214,2],[1217,1],[1228,1],[1238,1],[1251,2],[1268,1],[1293,2],[1322,2],[1325,1],[1336,1],[1343,1],[1355,1],[1365,2],[1373,2],[1378,1],[1388,3],[1399,1],[1404,1],[1415,1],[1420,2],[1437,2],[1440,1],[1455,2],[1464,2],[1478,1],[1501,2],[1515,2]];
const rects = (list, color) => list.map(([x, w]) => `<rect x="${x}" y="0" width="${w}" height="1" fill="${color}"/>`).join('');
document.getElementById('have').innerHTML = rects(part, '#c9e6bf') + rects(full, '#a9d87c');
document.getElementById('avail').innerHTML = rects(part, '#9c8142') + rects(full, '#a9d87c');
</script>
</body>
</html>
